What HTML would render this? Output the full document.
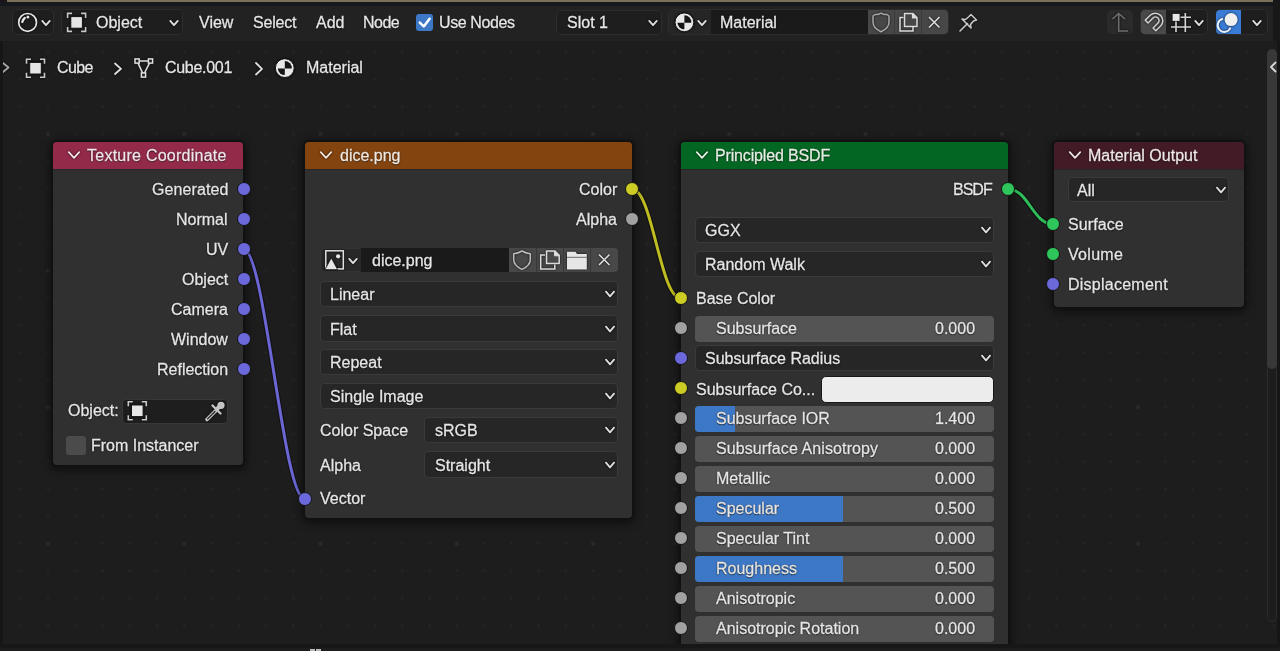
<!DOCTYPE html>
<html><head><meta charset="utf-8">
<style>
*{box-sizing:border-box;margin:0;padding:0}
html,body{width:1280px;height:651px;overflow:hidden;background:#1d1d1d;font-family:"Liberation Sans",sans-serif;font-size:16px;color:#e6e6e6}
.a{position:absolute}
.t{position:absolute;white-space:nowrap;line-height:18px;color:#e6e6e6;-webkit-text-stroke:0.28px currentColor;text-shadow:0 0 1.5px rgba(0,0,0,.9),0 1px 1px rgba(0,0,0,.6);will-change:transform}
svg{overflow:visible}
</style></head><body>
<div class="a" style="left:0;top:0;width:1280px;height:2px;background:#7d705a"></div>
<div class="a" style="left:0;top:2px;width:1280px;height:4px;background:#17181c"></div>
<div class="a" style="left:0;top:6px;width:1280px;height:35px;background:#222222"></div>
<div class="a" style="left:0;top:41px;width:1280px;height:604px;background-color:#1d1d1d;background-image:radial-gradient(circle at 3px 3px,#2a2a2a 1.4px,transparent 2.6px),radial-gradient(circle at 1.5px 1.5px,#242424 1.1px,transparent 1.6px);background-size:136.25px 136.5px,27.25px 27.3px;background-position:45px 90.3px,19.3px 9.7px"></div>
<div class="a" style="left:0;top:644px;width:1280px;height:4px;background:#171717"></div>
<div class="a" style="left:0;top:648px;width:1280px;height:3px;background:#1c1c1c"></div>

<div class="a" style="left:12px;top:9px;width:42px;height:26px;background:#1e1e1e;border:1px solid #2d2d2d;border-radius:5px;"></div>
<div class="a" style="left:61px;top:9px;width:122px;height:26px;background:#1e1e1e;border:1px solid #2d2d2d;border-radius:5px;"></div>
<div class="t" style="left:95.5px;top:13.5px;color:#e6e6e6;font-size:16px;">Object</div>
<div class="t" style="left:199px;top:13.5px;color:#e6e6e6;font-size:16px;">View</div>
<div class="t" style="left:253px;top:13.5px;color:#e6e6e6;font-size:16px;letter-spacing:-0.2px;">Select</div>
<div class="t" style="left:315.5px;top:13.5px;color:#e6e6e6;font-size:16px;">Add</div>
<div class="t" style="left:363px;top:13.5px;color:#e6e6e6;font-size:16px;letter-spacing:-0.5px;">Node</div>
<div class="a" style="left:416px;top:14px;width:17px;height:17px;background:#3d78c6;border-radius:3px;"></div>
<div class="t" style="left:439px;top:13.5px;color:#e6e6e6;font-size:16px;letter-spacing:-0.4px;">Use Nodes</div>
<div class="a" style="left:556px;top:10px;width:106px;height:25px;background:#1e1e1e;border:1px solid #2d2d2d;border-radius:5px;"></div>
<div class="t" style="left:567px;top:13.5px;color:#e6e6e6;font-size:16px;">Slot 1</div>
<div class="a" style="left:668px;top:9px;width:281px;height:26px;background:#1e1e1e;border:1px solid #2d2d2d;border-radius:5px;"></div>
<div class="a" style="left:669px;top:10px;width:42px;height:24px;background:#262626;border-radius:0px;border-radius:4px 0 0 4px"></div>
<div class="a" style="left:711px;top:10px;width:157px;height:24px;background:#1a1a1a;border-radius:0px;"></div>
<div class="a" style="left:868px;top:10px;width:80px;height:24px;background:#474747;border-radius:0px;border-radius:0 4px 4px 0"></div>
<div class="a" style="left:894px;top:10px;width:1px;height:24px;background:#3a3a3a;border-radius:0px;"></div>
<div class="a" style="left:921px;top:10px;width:1px;height:24px;background:#3a3a3a;border-radius:0px;"></div>
<div class="t" style="left:720px;top:13.5px;color:#e6e6e6;font-size:16px;">Material</div>
<div class="a" style="left:1107px;top:10px;width:26px;height:24px;background:#2b2b2b;border-radius:5px;"></div>
<div class="a" style="left:1140px;top:9px;width:68px;height:26px;background:#1e1e1e;border:1px solid #2d2d2d;border-radius:5px;"></div>
<div class="a" style="left:1141px;top:10px;width:25px;height:24px;background:#4a4a4a;border-radius:0px;border-radius:4px 0 0 4px"></div>
<div class="a" style="left:1216px;top:9px;width:52px;height:26px;background:#1e1e1e;border:1px solid #2d2d2d;border-radius:5px;"></div>
<div class="a" style="left:1216px;top:10px;width:25px;height:24px;background:#3a7bd5;border-radius:0px;border-radius:4px 0 0 4px"></div>
<svg class="a" style="left:39.5px;top:18.4px;filter:drop-shadow(0 0 1px rgba(0,0,0,.9))" width="12" height="10" viewBox="0 0 12 10"><path d="M2.25 2.85 L6 7.15 L9.75 2.85" fill="none" stroke="#e0e0e0" stroke-width="1.8" stroke-linecap="round" stroke-linejoin="round"/></svg>
<svg class="a" style="left:167.5px;top:18.4px;filter:drop-shadow(0 0 1px rgba(0,0,0,.9))" width="12" height="10" viewBox="0 0 12 10"><path d="M2.25 2.85 L6 7.15 L9.75 2.85" fill="none" stroke="#e0e0e0" stroke-width="1.8" stroke-linecap="round" stroke-linejoin="round"/></svg>
<svg class="a" style="left:647px;top:18.4px;filter:drop-shadow(0 0 1px rgba(0,0,0,.9))" width="12" height="10" viewBox="0 0 12 10"><path d="M2.25 2.85 L6 7.15 L9.75 2.85" fill="none" stroke="#e0e0e0" stroke-width="1.8" stroke-linecap="round" stroke-linejoin="round"/></svg>
<svg class="a" style="left:696px;top:18.4px;filter:drop-shadow(0 0 1px rgba(0,0,0,.9))" width="12" height="10" viewBox="0 0 12 10"><path d="M2.25 2.85 L6 7.15 L9.75 2.85" fill="none" stroke="#e0e0e0" stroke-width="1.8" stroke-linecap="round" stroke-linejoin="round"/></svg>
<svg class="a" style="left:1193.3px;top:18px;filter:drop-shadow(0 0 1px rgba(0,0,0,.9))" width="12" height="10" viewBox="0 0 12 10"><path d="M2.25 2.85 L6 7.15 L9.75 2.85" fill="none" stroke="#e0e0e0" stroke-width="1.8" stroke-linecap="round" stroke-linejoin="round"/></svg>
<svg class="a" style="left:1251px;top:18px;filter:drop-shadow(0 0 1px rgba(0,0,0,.9))" width="12" height="10" viewBox="0 0 12 10"><path d="M2.25 2.85 L6 7.15 L9.75 2.85" fill="none" stroke="#e0e0e0" stroke-width="1.8" stroke-linecap="round" stroke-linejoin="round"/></svg>
<svg class="a" style="left:0;top:0" width="1280" height="45">
<g style="filter:drop-shadow(0 0 1px rgba(0,0,0,.8))">
<circle cx="27.6" cy="22.4" r="8.9" fill="none" stroke="#e6e6e6" stroke-width="1.7"/>
<path d="M22.3 21.9 Q22.8 19.5 24.8 18" fill="none" stroke="#e6e6e6" stroke-width="2.3" stroke-linecap="round"/>
<circle cx="27.9" cy="17" r="1.5" fill="#e6e6e6"/>
<path d="M67.6 17.9 V13.399999999999999 H72.1 M81.1 13.399999999999999 H85.6 V17.9 M85.6 26.9 V31.4 H81.1 M72.1 31.4 H67.6 V26.9" fill="none" stroke="#c8c8c8" stroke-width="1.6"/><rect x="70.8" y="16.599999999999998" width="11.6" height="11.6" fill="#e6e6e6" stroke="#141414" stroke-width="1"/>
<circle cx="684.4" cy="22.3" r="9.4" fill="#e8e8e8" stroke="#141414" stroke-width="1"/><path d="M684.4 22.8 V15.3 A7 7 0 0 1 691.4 22.8 Z" fill="#151515"/><path d="M684.4 22.8 H677.4 A7 7 0 0 0 684.4 29.3 Z" fill="#151515"/>
<path d="M875 14.5 Q878 15 881 13.2 Q884 15 887 14.5 L889 16 V22 Q889 28 881 31.8 Q873 28 873 22 V16 Z" fill="none" stroke="#a8a8a8" stroke-width="1.5" stroke-linejoin="round"/>
<path d="M903.5 17.5 H900 V31 H913 V27" fill="none" stroke="#dcdcdc" stroke-width="1.5"/>
<path d="M904.5 13.5 H913 L917 17.5 V26.5 H904.5 Z" fill="#474747" stroke="#dcdcdc" stroke-width="1.5" stroke-linejoin="round"/>
<path d="M912.5 13.5 V18 H917" fill="#dcdcdc" stroke="#dcdcdc" stroke-width="1.2"/>
<path d="M929 17 L939.5 27.5 M939.5 17 L929 27.5" stroke="#dcdcdc" stroke-width="1.6"/>
<path d="M967.5 23.5 L960 31" stroke="#c8c8c8" stroke-width="1.6" stroke-linecap="round"/>
<path d="M971 14.5 L976.5 20 L973.5 21 L970.5 24.5 L971 28 L962 19 L965.5 19.5 L969 16.5 Z" fill="none" stroke="#c8c8c8" stroke-width="1.6" stroke-linejoin="round"/>
<path d="M1112.5 19 L1118.7 13.5 L1125 19 M1118.7 14 V31 H1128" fill="none" stroke="#6e6e6e" stroke-width="1.6"/>
<path d="M1145.25 20.15 L1150.2 15.2 A7.5 7.5 0 0 1 1160.8 25.8 L1155.85 30.75 L1153.05 27.95 L1158 23 A3.5 3.5 0 0 0 1153 18 L1148.05 22.95 Z" fill="none" stroke="#cfcfcf" stroke-width="1.5" stroke-linejoin="round"/>
<rect x="1172.6" y="13.9" width="7" height="7" fill="#e6e6e6"/>
<path d="M1176 21.5 V32 M1185.3 13 V32 M1180.5 17.2 H1191 M1171 27 H1191" stroke="#d6d6d6" stroke-width="1.6"/>
<circle cx="1231.1" cy="19.6" r="6.5" fill="#f0f0f0"/>
<path d="M1230.5 27.5 A6.6 6.6 0 1 1 1223 18.8" fill="none" stroke="#e8f0ff" stroke-width="2"/>
</g>
<path d="M419.8 22.6 L423.8 26.4 L429.6 18.8" fill="none" stroke="#fff" stroke-width="2.5" stroke-linecap="round" stroke-linejoin="round"/>
</svg>
<div class="t" style="left:56.5px;top:58.5px;color:#e6e6e6;font-size:16px;letter-spacing:-0.6px;">Cube</div>
<div class="t" style="left:165px;top:58.5px;color:#e6e6e6;font-size:16px;letter-spacing:-0.3px;">Cube.001</div>
<div class="t" style="left:306px;top:58.5px;color:#e6e6e6;font-size:16px;">Material</div>
<svg class="a" style="left:0;top:45px" width="400" height="45" viewBox="0 45 400 45">
<g style="filter:drop-shadow(0 0 1px rgba(0,0,0,.8))">
<path d="M3 63 L8.5 67.5 L3 72" fill="none" stroke="#a8a8a8" stroke-width="1.8" stroke-linejoin="round" stroke-linecap="round"/>
<path d="M26.5 63.7 V59.2 H31.0 M40.0 59.2 H44.5 V63.7 M44.5 72.7 V77.2 H40.0 M31.0 77.2 H26.5 V72.7" fill="none" stroke="#c8c8c8" stroke-width="1.6"/><rect x="29.7" y="62.400000000000006" width="11.6" height="11.6" fill="#e6e6e6" stroke="#141414" stroke-width="1"/>
<path d="M115 63.5 L121 68.8 L115 74" fill="none" stroke="#e0e0e0" stroke-width="1.8" stroke-linejoin="round" stroke-linecap="round"/>
<path d="M137.1 61 H150.5 L143.5 75 Z" fill="none" stroke="#e0e0e0" stroke-width="1.6"/>
<rect x="135" y="58.9" width="4.2" height="4.2" fill="#1d1d1d" stroke="#e0e0e0" stroke-width="1.5"/>
<rect x="148.4" y="58.9" width="4.2" height="4.2" fill="#1d1d1d" stroke="#e0e0e0" stroke-width="1.5"/>
<rect x="141.4" y="72.9" width="4.2" height="4.2" fill="#1d1d1d" stroke="#e0e0e0" stroke-width="1.5"/>
<path d="M256 63 L262 68.8 L256 74.5" fill="none" stroke="#e0e0e0" stroke-width="1.8" stroke-linejoin="round" stroke-linecap="round"/>
<circle cx="284.8" cy="68.1" r="9.4" fill="#e8e8e8" stroke="#141414" stroke-width="1"/><path d="M284.8 68.6 V61.099999999999994 A7 7 0 0 1 291.8 68.6 Z" fill="#151515"/><path d="M284.8 68.6 H277.8 A7 7 0 0 0 284.8 75.1 Z" fill="#151515"/>
</g></svg>
<div class="a" style="left:0px;top:41px;width:2.5px;height:603px;background:#161616;border-radius:0px;"></div>
<div class="a" style="left:1277px;top:41px;width:3px;height:603px;background:#161616;border-radius:0px;"></div>
<div class="a" style="left:1267px;top:49px;width:10px;height:573px;background:#1d1d1d;border:1px solid #2c2c2c;border-radius:5px;"></div>
<div class="a" style="left:1267px;top:49px;width:10px;height:320px;background:#383838;border-radius:5px;"></div>
<svg class="a" style="left:1268px;top:60px" width="10" height="14" viewBox="0 0 10 14"><path d="M7.5 2.5 L3 7 L7.5 11.5" fill="none" stroke="#d8d8d8" stroke-width="1.8" stroke-linejoin="round" stroke-linecap="round"/></svg>
<svg class="a" style="left:0;top:0" width="1280" height="651"><path d="M243.5 249 C264.85 249 283.15 498.6 304.5 498.6" fill="none" stroke="#121212" stroke-width="5.2"/><path d="M243.5 249 C264.85 249 283.15 498.6 304.5 498.6" fill="none" stroke="#6a66d4" stroke-width="3"/><path d="M632 189 C652.37 189 660.13 298 680.5 298" fill="none" stroke="#121212" stroke-width="5.2"/><path d="M632 189 C652.37 189 660.13 298 680.5 298" fill="none" stroke="#c0bd22" stroke-width="3"/><path d="M1008 189 C1028.25 189 1032.75 224 1053 224" fill="none" stroke="#121212" stroke-width="5.2"/><path d="M1008 189 C1028.25 189 1032.75 224 1053 224" fill="none" stroke="#2ebd58" stroke-width="3"/></svg>
<div class="a" style="left:51px;top:140px;width:194px;height:327px;border-radius:6px;background:#111;box-shadow:0 2px 9px 1px rgba(0,0,0,.5)"></div>
<div class="a" style="left:53px;top:142px;width:190px;height:323px;border-radius:4px;background:#303030"></div>
<div class="a" style="left:53px;top:142px;width:190px;height:27px;border-radius:4px 4px 0 0;background:#932a4a"></div>
<div class="a" style="left:53px;top:169px;width:190px;height:1px;background:#262626"></div>
<svg class="a" style="left:67.5px;top:149.8px;filter:drop-shadow(0 0 1px rgba(0,0,0,.9))" width="12" height="10" viewBox="0 0 12 10"><path d="M0.75 2.1 L6 7.9 L11.25 2.1" fill="none" stroke="#f5e3ea" stroke-width="1.7" stroke-linecap="round" stroke-linejoin="round"/></svg>
<div class="t" style="left:87px;top:146.5px;color:#f5e3ea;font-size:16px;letter-spacing:0.25px;">Texture Coordinate</div>
<div class="t" style="right:1051.9px;top:180.5px;color:#e6e6e6;font-size:16px;letter-spacing:0.1px;">Generated</div>
<div class="t" style="right:1052px;top:210.5px;color:#e6e6e6;font-size:16px;">Normal</div>
<div class="t" style="right:1052px;top:240.5px;color:#e6e6e6;font-size:16px;">UV</div>
<div class="t" style="right:1052px;top:270.5px;color:#e6e6e6;font-size:16px;">Object</div>
<div class="t" style="right:1052px;top:300.5px;color:#e6e6e6;font-size:16px;">Camera</div>
<div class="t" style="right:1052px;top:330.5px;color:#e6e6e6;font-size:16px;">Window</div>
<div class="t" style="right:1052px;top:360.5px;color:#e6e6e6;font-size:16px;">Reflection</div>
<div class="t" style="left:67.5px;top:401.5px;color:#e6e6e6;font-size:16px;">Object:</div>
<div class="a" style="left:122px;top:399px;width:106px;height:24.5px;background:#1e1e1e;border:1px solid #383838;border-radius:4px;"></div>
<div class="a" style="left:66px;top:436px;width:19.5px;height:18.5px;background:#4b4b4b;border-radius:3px;"></div>
<svg class="a" style="left:0;top:380px" width="300" height="60" viewBox="0 380 300 60"><g style="filter:drop-shadow(0 0 1px rgba(0,0,0,.8))"><path d="M128.3 406.3 V401.8 H132.8 M141.8 401.8 H146.3 V406.3 M146.3 415.3 V419.8 H141.8 M132.8 419.8 H128.3 V415.3" fill="none" stroke="#c8c8c8" stroke-width="1.6"/><rect x="131.5" y="405.0" width="11.6" height="11.6" fill="#e6e6e6" stroke="#141414" stroke-width="1"/>
<path d="M207 419.5 L215.5 411" stroke="#c4c4c4" stroke-width="3.6" stroke-linecap="round"/>
<path d="M207.6 418.9 L215 411.5" stroke="#1e1e1e" stroke-width="1.2" stroke-linecap="round"/>
<path d="M212.5 405.5 L220.5 413.5" stroke="#c4c4c4" stroke-width="2.4" stroke-linecap="round"/>
<circle cx="221" cy="405.3" r="3.6" fill="#c4c4c4"/>
<path d="M216 410 L220 406" stroke="#c4c4c4" stroke-width="4"/>
</g></svg>
<div class="t" style="left:91px;top:436.5px;color:#e6e6e6;font-size:16px;">From Instancer</div>
<div class="a" style="left:236.5px;top:182px;width:14px;height:14px;border-radius:50%;background:#6b68dc;border:1.6px solid #151515"></div>
<div class="a" style="left:236.5px;top:212px;width:14px;height:14px;border-radius:50%;background:#6b68dc;border:1.6px solid #151515"></div>
<div class="a" style="left:236.5px;top:242px;width:14px;height:14px;border-radius:50%;background:#6b68dc;border:1.6px solid #151515"></div>
<div class="a" style="left:236.5px;top:272px;width:14px;height:14px;border-radius:50%;background:#6b68dc;border:1.6px solid #151515"></div>
<div class="a" style="left:236.5px;top:302px;width:14px;height:14px;border-radius:50%;background:#6b68dc;border:1.6px solid #151515"></div>
<div class="a" style="left:236.5px;top:332px;width:14px;height:14px;border-radius:50%;background:#6b68dc;border:1.6px solid #151515"></div>
<div class="a" style="left:236.5px;top:362px;width:14px;height:14px;border-radius:50%;background:#6b68dc;border:1.6px solid #151515"></div>
<div class="a" style="left:303px;top:140px;width:331px;height:380px;border-radius:6px;background:#111;box-shadow:0 2px 9px 1px rgba(0,0,0,.5)"></div>
<div class="a" style="left:305px;top:142px;width:327px;height:376px;border-radius:4px;background:#303030"></div>
<div class="a" style="left:305px;top:142px;width:327px;height:27px;border-radius:4px 4px 0 0;background:#834410"></div>
<div class="a" style="left:305px;top:169px;width:327px;height:1px;background:#262626"></div>
<svg class="a" style="left:320.0px;top:149.8px;filter:drop-shadow(0 0 1px rgba(0,0,0,.9))" width="12" height="10" viewBox="0 0 12 10"><path d="M0.75 2.1 L6 7.9 L11.25 2.1" fill="none" stroke="#f5e8dc" stroke-width="1.7" stroke-linecap="round" stroke-linejoin="round"/></svg>
<div class="t" style="left:339.5px;top:146.5px;color:#f5e8dc;font-size:16px;">dice.png</div>
<div class="t" style="right:663px;top:180.5px;color:#e6e6e6;font-size:16px;">Color</div>
<div class="t" style="right:663px;top:210.5px;color:#e6e6e6;font-size:16px;">Alpha</div>
<div class="a" style="left:319.5px;top:247.5px;width:298.5px;height:24.5px;background:#282828;border:1px solid #343434;border-radius:4px;"></div>
<div class="a" style="left:361px;top:248px;width:147.5px;height:23.5px;background:#1a1a1a;border-radius:0px;"></div>
<div class="a" style="left:508.5px;top:248px;width:109.0px;height:23.5px;background:#484848;border-radius:0px;border-radius:0 4px 4px 0"></div>
<div class="a" style="left:536px;top:248px;width:1px;height:23.5px;background:#383838;border-radius:0px;"></div>
<div class="a" style="left:563px;top:248px;width:1px;height:23.5px;background:#383838;border-radius:0px;"></div>
<div class="a" style="left:590px;top:248px;width:1px;height:23.5px;background:#383838;border-radius:0px;"></div>
<div class="t" style="left:371.5px;top:251.5px;color:#e6e6e6;font-size:16px;">dice.png</div>
<svg class="a" style="left:347px;top:255.89999999999998px;filter:drop-shadow(0 0 1px rgba(0,0,0,.9))" width="12" height="10" viewBox="0 0 12 10"><path d="M2.25 2.85 L6 7.15 L9.75 2.85" fill="none" stroke="#e0e0e0" stroke-width="1.8" stroke-linecap="round" stroke-linejoin="round"/></svg>
<svg class="a" style="left:300px;top:240px" width="330" height="40" viewBox="300 240 330 40"><g style="filter:drop-shadow(0 0 1px rgba(0,0,0,.85))">
<rect x="325.8" y="250.8" width="17.5" height="18.1" fill="none" stroke="#e0e0e0" stroke-width="1.5"/>
<path d="M325 269.6 L331.3 257.8 L337.6 269.6 Z" fill="#e6e6e6" stroke="#141414" stroke-width="0.8"/>
<circle cx="338.1" cy="256.3" r="2.1" fill="#e6e6e6"/>
<path d="M522 251 Q526 253.3 530.3 253.8 V259.5 Q530.3 265.5 522 269.4 Q513.7 265.5 513.7 259.5 V253.8 Q518 253.3 522 251 Z" fill="none" stroke="#bdbdbd" stroke-width="1.5" stroke-linejoin="round"/>
<path d="M545 255 H540.7 V269 H554.8 V264.5" fill="none" stroke="#dcdcdc" stroke-width="1.5"/>
<path d="M546.5 251 H555 L559.2 255.2 V263.5 H546.5 Z" fill="#484848" stroke="#dcdcdc" stroke-width="1.5" stroke-linejoin="round"/>
<path d="M554.5 251 V255.8 H559.2 Z" fill="#dcdcdc" stroke="#dcdcdc" stroke-width="1"/>
<path d="M567 251.8 H575.5 L577 254 H586.8 V269.6 H567 Z" fill="#e6e6e6"/>
<path d="M567 257.3 H586.8" stroke="#6a6a6a" stroke-width="1"/>
<path d="M599 254.5 L609.5 265 M609.5 254.5 L599 265" stroke="#dcdcdc" stroke-width="1.6"/>
</g></svg>
<div class="a" style="left:320px;top:281px;width:298px;height:26px;background:#262626;border:1px solid #3a3a3a;border-radius:4px;"></div>
<div class="t" style="left:330px;top:286.0px;color:#e6e6e6;font-size:16px;">Linear</div>
<svg class="a" style="left:603.5px;top:289.0px;filter:drop-shadow(0 0 1px rgba(0,0,0,.9))" width="12" height="10" viewBox="0 0 12 10"><path d="M2.0 2.7 L6 7.3 L10.0 2.7" fill="none" stroke="#e0e0e0" stroke-width="1.8" stroke-linecap="round" stroke-linejoin="round"/></svg>
<div class="a" style="left:320px;top:315px;width:298px;height:27px;background:#262626;border:1px solid #3a3a3a;border-radius:4px;"></div>
<div class="t" style="left:330px;top:320.5px;color:#e6e6e6;font-size:16px;">Flat</div>
<svg class="a" style="left:603.5px;top:323.5px;filter:drop-shadow(0 0 1px rgba(0,0,0,.9))" width="12" height="10" viewBox="0 0 12 10"><path d="M2.0 2.7 L6 7.3 L10.0 2.7" fill="none" stroke="#e0e0e0" stroke-width="1.8" stroke-linecap="round" stroke-linejoin="round"/></svg>
<div class="a" style="left:320px;top:349px;width:298px;height:26px;background:#262626;border:1px solid #3a3a3a;border-radius:4px;"></div>
<div class="t" style="left:330px;top:354.0px;color:#e6e6e6;font-size:16px;">Repeat</div>
<svg class="a" style="left:603.5px;top:357.0px;filter:drop-shadow(0 0 1px rgba(0,0,0,.9))" width="12" height="10" viewBox="0 0 12 10"><path d="M2.0 2.7 L6 7.3 L10.0 2.7" fill="none" stroke="#e0e0e0" stroke-width="1.8" stroke-linecap="round" stroke-linejoin="round"/></svg>
<div class="a" style="left:320px;top:383px;width:298px;height:26px;background:#262626;border:1px solid #3a3a3a;border-radius:4px;"></div>
<div class="t" style="left:330px;top:388.0px;color:#e6e6e6;font-size:16px;">Single Image</div>
<svg class="a" style="left:603.5px;top:391.0px;filter:drop-shadow(0 0 1px rgba(0,0,0,.9))" width="12" height="10" viewBox="0 0 12 10"><path d="M2.0 2.7 L6 7.3 L10.0 2.7" fill="none" stroke="#e0e0e0" stroke-width="1.8" stroke-linecap="round" stroke-linejoin="round"/></svg>
<div class="t" style="left:320px;top:421.5px;color:#e6e6e6;font-size:16px;">Color Space</div>
<div class="a" style="left:424px;top:417px;width:194px;height:26px;background:#262626;border:1px solid #3a3a3a;border-radius:4px;"></div>
<div class="t" style="left:435px;top:422.0px;color:#e6e6e6;font-size:16px;">sRGB</div>
<svg class="a" style="left:603.5px;top:425.0px;filter:drop-shadow(0 0 1px rgba(0,0,0,.9))" width="12" height="10" viewBox="0 0 12 10"><path d="M2.0 2.7 L6 7.3 L10.0 2.7" fill="none" stroke="#e0e0e0" stroke-width="1.8" stroke-linecap="round" stroke-linejoin="round"/></svg>
<div class="t" style="left:320px;top:456.5px;color:#e6e6e6;font-size:16px;">Alpha</div>
<div class="a" style="left:424px;top:451px;width:194px;height:27px;background:#262626;border:1px solid #3a3a3a;border-radius:4px;"></div>
<div class="t" style="left:435px;top:456.5px;color:#e6e6e6;font-size:16px;">Straight</div>
<svg class="a" style="left:603.5px;top:459.5px;filter:drop-shadow(0 0 1px rgba(0,0,0,.9))" width="12" height="10" viewBox="0 0 12 10"><path d="M2.0 2.7 L6 7.3 L10.0 2.7" fill="none" stroke="#e0e0e0" stroke-width="1.8" stroke-linecap="round" stroke-linejoin="round"/></svg>
<div class="t" style="left:320px;top:489.5px;color:#e6e6e6;font-size:16px;">Vector</div>
<div class="a" style="left:625px;top:182px;width:14px;height:14px;border-radius:50%;background:#cccc24;border:1.6px solid #151515"></div>
<div class="a" style="left:625px;top:212px;width:14px;height:14px;border-radius:50%;background:#a1a1a1;border:1.6px solid #151515"></div>
<div class="a" style="left:297.5px;top:491.6px;width:14px;height:14px;border-radius:50%;background:#6b68dc;border:1.6px solid #151515"></div>
<div class="a" style="left:679px;top:140px;width:331px;height:522px;border-radius:6px;background:#111;box-shadow:0 2px 9px 1px rgba(0,0,0,.5)"></div>
<div class="a" style="left:681px;top:142px;width:327px;height:518px;border-radius:4px;background:#303030"></div>
<div class="a" style="left:681px;top:142px;width:327px;height:27px;border-radius:4px 4px 0 0;background:#036622"></div>
<div class="a" style="left:681px;top:169px;width:327px;height:1px;background:#262626"></div>
<svg class="a" style="left:695.5px;top:149.8px;filter:drop-shadow(0 0 1px rgba(0,0,0,.9))" width="12" height="10" viewBox="0 0 12 10"><path d="M0.75 2.1 L6 7.9 L11.25 2.1" fill="none" stroke="#e2f0e2" stroke-width="1.7" stroke-linecap="round" stroke-linejoin="round"/></svg>
<div class="t" style="left:715px;top:146.5px;color:#e2f0e2;font-size:16px;letter-spacing:-0.15px;">Principled BSDF</div>
<div class="t" style="right:288.0px;top:180.5px;color:#e6e6e6;font-size:16px;letter-spacing:-1.0px;">BSDF</div>
<div class="a" style="left:695px;top:217px;width:299px;height:26px;background:#262626;border:1px solid #3a3a3a;border-radius:4px;"></div>
<div class="t" style="left:705px;top:222.0px;color:#e6e6e6;font-size:16px;">GGX</div>
<svg class="a" style="left:979.5px;top:225.0px;filter:drop-shadow(0 0 1px rgba(0,0,0,.9))" width="12" height="10" viewBox="0 0 12 10"><path d="M2.0 2.7 L6 7.3 L10.0 2.7" fill="none" stroke="#e0e0e0" stroke-width="1.8" stroke-linecap="round" stroke-linejoin="round"/></svg>
<div class="a" style="left:695px;top:251px;width:299px;height:26px;background:#262626;border:1px solid #3a3a3a;border-radius:4px;"></div>
<div class="t" style="left:705px;top:256.0px;color:#e6e6e6;font-size:16px;">Random Walk</div>
<svg class="a" style="left:979.5px;top:259.0px;filter:drop-shadow(0 0 1px rgba(0,0,0,.9))" width="12" height="10" viewBox="0 0 12 10"><path d="M2.0 2.7 L6 7.3 L10.0 2.7" fill="none" stroke="#e0e0e0" stroke-width="1.8" stroke-linecap="round" stroke-linejoin="round"/></svg>
<div class="t" style="left:696px;top:289.5px;color:#e6e6e6;font-size:16px;">Base Color</div>
<div class="a" style="left:695px;top:316px;width:299px;height:26px;background:#545454;border-radius:4px;overflow:hidden"></div>
<div class="t" style="left:716px;top:319.9px;color:#e6e6e6;font-size:16px;">Subsurface</div>
<div class="t" style="right:305px;top:319.9px;color:#e6e6e6;font-size:16px;">0.000</div>
<div class="a" style="left:695px;top:345px;width:299px;height:26px;background:#262626;border:1px solid #3a3a3a;border-radius:4px;"></div>
<div class="t" style="left:705px;top:350.0px;color:#e6e6e6;font-size:16px;">Subsurface Radius</div>
<svg class="a" style="left:979.5px;top:353.0px;filter:drop-shadow(0 0 1px rgba(0,0,0,.9))" width="12" height="10" viewBox="0 0 12 10"><path d="M2.0 2.7 L6 7.3 L10.0 2.7" fill="none" stroke="#e0e0e0" stroke-width="1.8" stroke-linecap="round" stroke-linejoin="round"/></svg>
<div class="t" style="left:695.5px;top:380.5px;color:#e6e6e6;font-size:16px;">Subsurface Co...</div>
<div class="a" style="left:820.5px;top:375.5px;width:173.5px;height:27.0px;background:#ececec;border:1px solid #181818;border-radius:5px;"></div>
<div class="a" style="left:695px;top:406px;width:299px;height:26px;background:#545454;border-radius:4px;overflow:hidden"><div class="a" style="left:0;top:0;bottom:0;width:39.5px;background:#3d78c6"></div></div>
<div class="t" style="left:716px;top:409.9px;color:#e6e6e6;font-size:16px;">Subsurface IOR</div>
<div class="t" style="right:305px;top:409.9px;color:#e6e6e6;font-size:16px;">1.400</div>
<div class="a" style="left:695px;top:436px;width:299px;height:26px;background:#545454;border-radius:4px;overflow:hidden"></div>
<div class="t" style="left:716px;top:439.9px;color:#e6e6e6;font-size:16px;letter-spacing:0.1px;">Subsurface Anisotropy</div>
<div class="t" style="right:305px;top:439.9px;color:#e6e6e6;font-size:16px;">0.000</div>
<div class="a" style="left:695px;top:466px;width:299px;height:26px;background:#545454;border-radius:4px;overflow:hidden"></div>
<div class="t" style="left:716px;top:469.9px;color:#e6e6e6;font-size:16px;">Metallic</div>
<div class="t" style="right:305px;top:469.9px;color:#e6e6e6;font-size:16px;">0.000</div>
<div class="a" style="left:695px;top:496px;width:299px;height:26px;background:#545454;border-radius:4px;overflow:hidden"><div class="a" style="left:0;top:0;bottom:0;width:148px;background:#3d78c6"></div></div>
<div class="t" style="left:716px;top:499.9px;color:#e6e6e6;font-size:16px;">Specular</div>
<div class="t" style="right:305px;top:499.9px;color:#e6e6e6;font-size:16px;">0.500</div>
<div class="a" style="left:695px;top:526px;width:299px;height:26px;background:#545454;border-radius:4px;overflow:hidden"></div>
<div class="t" style="left:716px;top:529.9px;color:#e6e6e6;font-size:16px;">Specular Tint</div>
<div class="t" style="right:305px;top:529.9px;color:#e6e6e6;font-size:16px;">0.000</div>
<div class="a" style="left:695px;top:556px;width:299px;height:26px;background:#545454;border-radius:4px;overflow:hidden"><div class="a" style="left:0;top:0;bottom:0;width:148px;background:#3d78c6"></div></div>
<div class="t" style="left:716px;top:559.9px;color:#e6e6e6;font-size:16px;">Roughness</div>
<div class="t" style="right:305px;top:559.9px;color:#e6e6e6;font-size:16px;">0.500</div>
<div class="a" style="left:695px;top:586px;width:299px;height:26px;background:#545454;border-radius:4px;overflow:hidden"></div>
<div class="t" style="left:716px;top:589.9px;color:#e6e6e6;font-size:16px;">Anisotropic</div>
<div class="t" style="right:305px;top:589.9px;color:#e6e6e6;font-size:16px;">0.000</div>
<div class="a" style="left:695px;top:616px;width:299px;height:26px;background:#545454;border-radius:4px;overflow:hidden"></div>
<div class="t" style="left:716px;top:619.9px;color:#e6e6e6;font-size:16px;">Anisotropic Rotation</div>
<div class="t" style="right:305px;top:619.9px;color:#e6e6e6;font-size:16px;">0.000</div>
<div class="a" style="left:1001px;top:182px;width:14px;height:14px;border-radius:50%;background:#2ec65a;border:1.6px solid #151515"></div>
<div class="a" style="left:673.5px;top:291px;width:14px;height:14px;border-radius:50%;background:#cccc24;border:1.6px solid #151515"></div>
<div class="a" style="left:673.5px;top:321px;width:14px;height:14px;border-radius:50%;background:#a1a1a1;border:1.6px solid #151515"></div>
<div class="a" style="left:673.5px;top:351px;width:14px;height:14px;border-radius:50%;background:#6b68dc;border:1.6px solid #151515"></div>
<div class="a" style="left:673.5px;top:381px;width:14px;height:14px;border-radius:50%;background:#cccc24;border:1.6px solid #151515"></div>
<div class="a" style="left:673.5px;top:411px;width:14px;height:14px;border-radius:50%;background:#a1a1a1;border:1.6px solid #151515"></div>
<div class="a" style="left:673.5px;top:441px;width:14px;height:14px;border-radius:50%;background:#a1a1a1;border:1.6px solid #151515"></div>
<div class="a" style="left:673.5px;top:471px;width:14px;height:14px;border-radius:50%;background:#a1a1a1;border:1.6px solid #151515"></div>
<div class="a" style="left:673.5px;top:501px;width:14px;height:14px;border-radius:50%;background:#a1a1a1;border:1.6px solid #151515"></div>
<div class="a" style="left:673.5px;top:531px;width:14px;height:14px;border-radius:50%;background:#a1a1a1;border:1.6px solid #151515"></div>
<div class="a" style="left:673.5px;top:561px;width:14px;height:14px;border-radius:50%;background:#a1a1a1;border:1.6px solid #151515"></div>
<div class="a" style="left:673.5px;top:591px;width:14px;height:14px;border-radius:50%;background:#a1a1a1;border:1.6px solid #151515"></div>
<div class="a" style="left:673.5px;top:621px;width:14px;height:14px;border-radius:50%;background:#a1a1a1;border:1.6px solid #151515"></div>
<div class="a" style="left:1052px;top:140px;width:193.5px;height:169px;border-radius:6px;background:#111;box-shadow:0 2px 9px 1px rgba(0,0,0,.5)"></div>
<div class="a" style="left:1054px;top:142px;width:189.5px;height:165px;border-radius:4px;background:#303030"></div>
<div class="a" style="left:1054px;top:142px;width:189.5px;height:27px;border-radius:4px 4px 0 0;background:#431b26"></div>
<div class="a" style="left:1054px;top:169px;width:189.5px;height:1px;background:#262626"></div>
<svg class="a" style="left:1068.5px;top:149.8px;filter:drop-shadow(0 0 1px rgba(0,0,0,.9))" width="12" height="10" viewBox="0 0 12 10"><path d="M0.75 2.1 L6 7.9 L11.25 2.1" fill="none" stroke="#f0e6e8" stroke-width="1.7" stroke-linecap="round" stroke-linejoin="round"/></svg>
<div class="t" style="left:1088px;top:146.5px;color:#f0e6e8;font-size:16px;">Material Output</div>
<div class="a" style="left:1068px;top:177px;width:161px;height:25px;background:#262626;border:1px solid #3a3a3a;border-radius:4px;"></div>
<div class="t" style="left:1077px;top:181.5px;color:#e6e6e6;font-size:16px;">All</div>
<svg class="a" style="left:1214.5px;top:184.5px;filter:drop-shadow(0 0 1px rgba(0,0,0,.9))" width="12" height="10" viewBox="0 0 12 10"><path d="M2.0 2.7 L6 7.3 L10.0 2.7" fill="none" stroke="#e0e0e0" stroke-width="1.8" stroke-linecap="round" stroke-linejoin="round"/></svg>
<div class="t" style="left:1068px;top:215.5px;color:#e6e6e6;font-size:16px;letter-spacing:0.1px;">Surface</div>
<div class="t" style="left:1068px;top:245.5px;color:#e6e6e6;font-size:16px;letter-spacing:0.3px;">Volume</div>
<div class="t" style="left:1068px;top:275.5px;color:#e6e6e6;font-size:16px;letter-spacing:0.25px;">Displacement</div>
<div class="a" style="left:1046px;top:217px;width:14px;height:14px;border-radius:50%;background:#2ec65a;border:1.6px solid #151515"></div>
<div class="a" style="left:1046px;top:247px;width:14px;height:14px;border-radius:50%;background:#2ec65a;border:1.6px solid #151515"></div>
<div class="a" style="left:1046px;top:277px;width:14px;height:14px;border-radius:50%;background:#6b68dc;border:1.6px solid #151515"></div>
<div class="a" style="left:0;top:644px;width:1280px;height:4px;background:#171717"></div><div class="a" style="left:0;top:648px;width:1280px;height:3px;background:#1c1c1c"></div>
<div class="a" style="left:1273px;top:0;width:7px;height:41px;background:#181818"></div>
<div class="a" style="left:0;top:0;width:7px;height:2px;background:#17151a"></div>
<div class="a" style="left:309.5px;top:649px;width:5px;height:2px;background:#b8b8b8"></div><div class="a" style="left:315.5px;top:649px;width:5px;height:2px;background:#b8b8b8"></div>
</body></html>
